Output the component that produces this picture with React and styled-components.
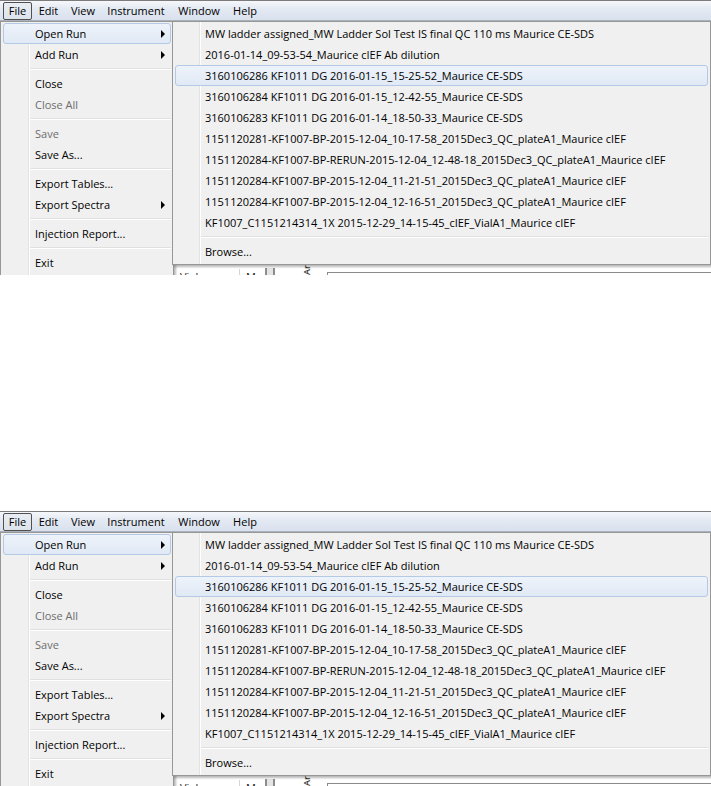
import React from "react";
import styled, { createGlobalStyle } from "styled-components";

const GlobalStyle = createGlobalStyle`
  html, body {
    margin: 0;
    padding: 0;
    background: #ffffff;
  }
  body {
    font-family: "Open Sans", "Noto Sans", sans-serif;
  }
`;

const Page = styled.div`
  display: flex;
  flex-direction: column;
  gap: 236px;
  width: 711px;
`;

const Screen = styled.div`
  position: relative;
  display: flex;
  flex-direction: column;
  height: 275px;
  overflow: hidden;
  background: #ffffff;
  font-family: "Open Sans", "Noto Sans", sans-serif;
  font-size: 11px;
  color: #000;
`;

/* ---- menu bar ---- */

const MenuBar = styled.div`
  display: flex;
  align-items: center;
  flex-shrink: 0;
  height: 19px;
  padding-left: 3px;
  border-top: 1px solid #7c7c7c;
  border-bottom: 1px solid #a9b1bd;
  background: linear-gradient(#f5f7fb 0%, #e4eaf3 40%, #d9e1ee 100%);
`;

const BarItem = styled.div`
  display: flex;
  align-items: center;
  justify-content: center;
  box-sizing: border-box;
  width: ${(p) => p.$w}px;
  height: 18px;
  padding-bottom: 1px;
  border: 1px solid ${(p) => (p.$active ? "#505050" : "transparent")};
  border-radius: 2px;
  background: ${(p) =>
    p.$active ? "linear-gradient(#e9edf3, #dde3ec)" : "transparent"};
  white-space: nowrap;
`;

/* ---- application body behind the menus ---- */

const AppBody = styled.div`
  flex: 1;
  display: flex;
  flex-direction: column;
  justify-content: flex-end;
`;

const HeaderRow = styled.div`
  display: flex;
  height: 7px;
  padding-left: 178px;
  overflow: visible;
`;

const HeaderCell = styled.div`
  width: ${(p) => p.$w}px;
  box-sizing: border-box;
  padding-left: ${(p) => p.$pad || 2}px;
  border-right: 1px solid ${(p) => (p.$line ? "#d6d6d6" : "transparent")};
  line-height: 15px;
  margin-top: 1px;
  color: #1a1a1a;
  white-space: nowrap;
`;

const Splitter = styled.div`
  width: 10px;
  box-sizing: border-box;
  border-left: 2px solid #8d8d8d;
  border-right: 2px solid #8d8d8d;
  background: #e4e4e4;
  margin-right: 28px;
`;

const RotatedLabel = styled.div`
  width: 24px;
  font-size: 9px;
  font-weight: 600;
  writing-mode: vertical-rl;
  transform: rotate(180deg);
  color: #333;
  line-height: 8px;
`;

const ChartBox = styled.div`
  flex: 1;
  margin-top: 4px;
  border-top: 1px solid #8a8a8a;
  border-left: 1px solid #8a8a8a;
`;

/* ---- drop-down menus ---- */

const Menu = styled.div`
  position: absolute;
  top: 21px;
  left: ${(p) => p.$left}px;
  width: ${(p) => p.$width}px;
  box-sizing: border-box;
  padding: 1px 2px 2px;
  border: 1px solid #979797;
  background: linear-gradient(
    to right,
    #f0f0f0 ${(p) => p.$col}px,
    #e2e3e3 ${(p) => p.$col}px,
    #e2e3e3 ${(p) => p.$col + 1}px,
    #ffffff ${(p) => p.$col + 1}px,
    #ffffff ${(p) => p.$col + 2}px,
    #f0f0f0 ${(p) => p.$col + 2}px
  );
  box-shadow: 2px 2px 2px rgba(0, 0, 0, 0.28);
  z-index: ${(p) => p.$z || 1};
`;

const Item = styled.div`
  display: flex;
  align-items: center;
  justify-content: space-between;
  box-sizing: border-box;
  height: 21px;
  padding: 0 5px 1px ${(p) => p.$indent}px;
  border: 1px solid ${(p) => (p.$hot ? "#b3c9e5" : "transparent")};
  border-radius: 3px;
  background: ${(p) =>
    p.$hot ? "linear-gradient(#eef3fa, #e0e9f5)" : "transparent"};
  color: ${(p) => (p.$disabled ? "#6d6d6d" : "#000")};
  white-space: nowrap;
`;

const Arrow = styled.span`
  width: 0;
  height: 0;
  margin-top: 1px;
  border-left: 4px solid #000;
  border-top: 4px solid transparent;
  border-bottom: 4px solid transparent;
`;

const Separator = styled.div`
  height: 8px;
  display: flex;
  align-items: center;
  padding-left: ${(p) => p.$indent}px;

  &::after {
    content: "";
    flex: 1;
    height: 0;
    border-top: 1px solid #e0e0e0;
    border-bottom: 1px solid #ffffff;
  }
`;

const barItems = [
  { label: "File", w: 29, active: true },
  { label: "Edit", w: 33 },
  { label: "View", w: 36 },
  { label: "Instrument", w: 70 },
  { label: "Window", w: 56 },
  { label: "Help", w: 36 },
];

const fileMenu = [
  { label: "Open Run", sub: true, hot: true },
  { label: "Add Run", sub: true },
  "-",
  { label: "Close" },
  { label: "Close All", disabled: true },
  "-",
  { label: "Save", disabled: true },
  { label: "Save As..." },
  "-",
  { label: "Export Tables..." },
  { label: "Export Spectra", sub: true },
  "-",
  { label: "Injection Report..." },
  "-",
  { label: "Exit" },
];

const recentRuns = [
  "MW ladder assigned_MW Ladder Sol Test IS final QC 110 ms Maurice CE-SDS",
  "2016-01-14_09-53-54_Maurice cIEF Ab dilution",
  "3160106286 KF1011 DG 2016-01-15_15-25-52_Maurice CE-SDS",
  "3160106284 KF1011 DG 2016-01-15_12-42-55_Maurice CE-SDS",
  "3160106283 KF1011 DG 2016-01-14_18-50-33_Maurice CE-SDS",
  "1151120281-KF1007-BP-2015-12-04_10-17-58_2015Dec3_QC_plateA1_Maurice cIEF",
  "1151120284-KF1007-BP-RERUN-2015-12-04_12-48-18_2015Dec3_QC_plateA1_Maurice cIEF",
  "1151120284-KF1007-BP-2015-12-04_11-21-51_2015Dec3_QC_plateA1_Maurice cIEF",
  "1151120284-KF1007-BP-2015-12-04_12-16-51_2015Dec3_QC_plateA1_Maurice cIEF",
  "KF1007_C1151214314_1X 2015-12-29_14-15-45_cIEF_VialA1_Maurice cIEF",
];

function FileMenu() {
  return (
    <Menu $left={0} $width={174} $col={27} $z={1}>
      {fileMenu.map((it, i) =>
        it === "-" ? (
          <Separator key={i} $indent={27} />
        ) : (
          <Item key={i} $indent={31} $hot={it.hot} $disabled={it.disabled}>
            <span>{it.label}</span>
            {it.sub && <Arrow />}
          </Item>
        )
      )}
    </Menu>
  );
}

function OpenRunMenu() {
  return (
    <Menu $left={172} $width={539} $col={26} $z={2}>
      {recentRuns.map((run, i) => (
        <Item key={run} $indent={29} $hot={i === 2}>
          <span>{run}</span>
        </Item>
      ))}
      <Separator $indent={26} />
      <Item $indent={29}>
        <span>Browse...</span>
      </Item>
    </Menu>
  );
}

function AppWindow() {
  return (
    <Screen>
      <MenuBar>
        {barItems.map((b) => (
          <BarItem key={b.label} $w={b.w} $active={b.active}>
            {b.label}
          </BarItem>
        ))}
      </MenuBar>
      <AppBody>
        <HeaderRow>
          <HeaderCell $w={62} $line>
            Vial
          </HeaderCell>
          <HeaderCell $w={25} $pad={6}>
            M
          </HeaderCell>
          <Splitter />
          <RotatedLabel>Area</RotatedLabel>
          <ChartBox />
        </HeaderRow>
      </AppBody>
      <FileMenu />
      <OpenRunMenu />
    </Screen>
  );
}

export default function App() {
  return (
    <Page>
      <GlobalStyle />
      <AppWindow />
      <AppWindow />
    </Page>
  );
}
